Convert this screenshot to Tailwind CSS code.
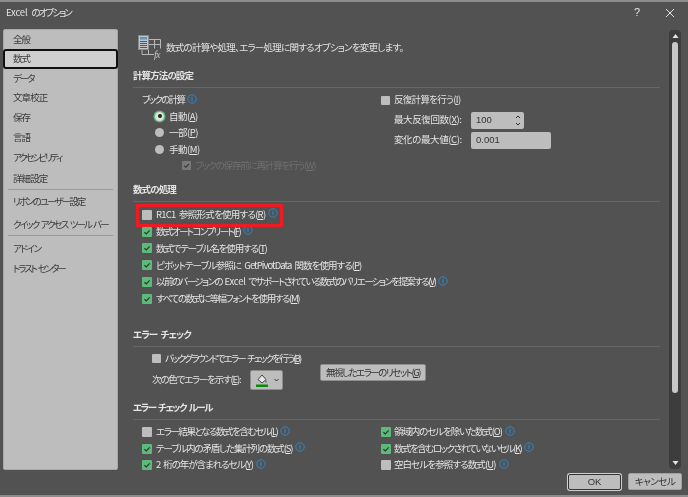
<!DOCTYPE html>
<html lang="ja">
<head>
    <meta charset="UTF-8">
    <title>Excel のオプション</title>
    <script src="https://cdn.jsdelivr.net/npm/@tailwindcss/browser@4"></script>
</head>
<body class="bg-[#525252]">
<svg class="hidden">
    <symbol id="info" viewBox="0 0 10 10"><circle cx="5" cy="5" r="4.2" fill="none" stroke="#2f86c6" stroke-width="1"/><path d="M5 2.700v4.600" stroke="#2f86c6" stroke-width="1.100"/></symbol>
    <symbol id="tick" viewBox="0 0 10 10"><path d="M2.400 5.200l1.900 1.800 3.400-3.600" fill="none" stroke="#333" stroke-width="1.200"/></symbol>
</svg>
<div class="relative w-[688px] h-[497px] overflow-hidden bg-[#525252] border-t-2 border-b-2 border-[#8c8c8c] text-[#e4e4e4] text-[9.500px] leading-none whitespace-nowrap [font-feature-settings:'palt'] [word-spacing:2px] blur-[0.3px] font-['Noto_Sans_CJK_JP','Liberation_Sans',sans-serif]">
    <!-- title bar -->
    <div class="flex items-center h-[27px] pb-[6px] pl-[6px] pr-[13px]">
        <span class="tracking-[-1.900px]"><span class="tracking-[-0.2px]">Excel </span>のオプション</span>
        <span class="ml-auto text-[11px] font-['Liberation_Sans',sans-serif]">?</span>
        <svg class="ml-[25px] w-[10px] h-[10px]" viewBox="0 0 10 10"><path d="M1 1l8 8M9 1l-8 8" stroke="#e4e4e4" stroke-width="1"/></svg>
    </div>

    <div class="flex h-[444px] pl-[3px]">
        <!-- sidebar -->
        <div class="w-[115px] h-[441px] shrink-0 bg-[#bdbdbd] rounded-[2px] border border-[#a8a8a8] text-[#3a3a3a] tracking-[-0.9px]">
            <div class="flex items-center h-[19px] pl-[9px]">全般</div>
            <div class="flex items-center h-[19.700px] pl-[8px] -mx-px bg-[#cfcfcf] border-2 border-[#111] rounded-[3px]">数式</div>
            <div class="flex items-center h-[19.700px] pl-[9px] tracking-[-2px]">データ</div>
            <div class="flex items-center h-[19.700px] pl-[9px]">文章校正</div>
            <div class="flex items-center h-[19.700px] pl-[9px]">保存</div>
            <div class="flex items-center h-[19.700px] pl-[9px]">言語</div>
            <div class="flex items-center h-[19.700px] pl-[9px] tracking-[-2.300px]">アクセシビリティ</div>
            <div class="flex items-center h-[20px] pl-[9px] mt-[2px]">詳細設定</div>
            <div class="h-px mx-[4px] bg-[#9a9a9a]"></div>
            <div class="flex items-center h-[20px] pl-[9px] mt-[2px] tracking-[-1.900px]">リボンのユーザー設定</div>
            <div class="flex items-center h-[20px] pl-[9px] mt-[3px] tracking-[-1.900px]">クイック アクセス ツール バー</div>
            <div class="h-px mx-[4px] bg-[#9a9a9a]"></div>
            <div class="flex items-center h-[20px] pl-[9px] mt-[3px] tracking-[-1.400px]">アドイン</div>
            <div class="flex items-center h-[20px] pl-[9px] tracking-[-2.100px]">トラスト センター</div>
        </div>

        <!-- options -->
        <div class="w-[527px] h-[441px] ml-[15px] shrink-0 overflow-hidden tracking-[-0.9px]">
            <div class="flex items-center h-[37px] pl-[5px]">
                <svg class="w-[24px] h-[25px] shrink-0" viewBox="0 0 24 25" fill="none">
                    <rect x="0.500" y="0.500" width="10" height="14" fill="#c4c4c4" stroke="#8a8a8a"/>
                    <rect x="2" y="2" width="7" height="2.500" fill="#4a9bd8"/>
                    <path d="M2 6.500h7M2 8.500h7M2 10.500h7M2 12.500h7" stroke="#555"/>
                    <path d="M11 4.500h11.500M11 9.500h11.500M16.500 4.500v9M22.500 4.500v9M4 15v4.500h12M10.500 15v4.500" stroke="#b8b8b8"/>
                    <text x="16" y="23" font-size="10" font-style="italic" fill="#c4c4c4" font-family="Liberation Serif, serif">fx</text>
                </svg>
                <span class="ml-[4px] tracking-[-0.75px]">数式の計算や処理、エラー処理に関するオプションを変更します。</span>
            </div>

            <h2 class="flex items-center h-[22px] pb-[1px] border-b border-[#666] font-bold">計算方法の設定</h2>
            <div class="grid grid-cols-[248px_1fr] mt-[4px]">
                <div>
                    <div class="flex items-center h-[16px] pl-[9px] tracking-[-1.700px]">ブックの計算<svg class="ml-[3px] -mt-[3px] w-[10px] h-[10px]"><use href="#info"/></svg></div>
                    <div class="flex items-center h-[16.500px] pl-[22px] tracking-[-0.5px]"><span class="flex items-center justify-center w-[9px] h-[9px] shrink-0 rounded-full bg-[#e0e0e0] ring-[1.500px] ring-[#5cbb7b]"><span class="w-[4px] h-[4px] rounded-full bg-[#222]"></span></span><span class="ml-[5px]">自動(<u>A</u>)</span></div>
                    <div class="flex items-center h-[16.500px] pl-[22px] tracking-[-0.5px]"><span class="w-[9px] h-[9px] shrink-0 rounded-full bg-[#bdbdbd]"></span><span class="ml-[5px]">一部(<u>P</u>)</span></div>
                    <div class="flex items-center h-[16.500px] pl-[22px] tracking-[-0.5px]"><span class="w-[9px] h-[9px] shrink-0 rounded-full bg-[#bdbdbd]"></span><span class="ml-[5px]">手動(<u>M</u>)</span></div>
                    <div class="flex items-center h-[16.500px] pl-[49px] text-[#6f6f6f] tracking-[-1.200px]"><span class="w-[9px] h-[9px] shrink-0 rounded-[1px] bg-[#787878]"><svg class="w-[9px] h-[9px]"><use href="#tick"/></svg></span><span class="ml-[4px]">ブックの保存前に再計算を行う(<u>W</u>)</span></div>
                </div>
                <div>
                    <div class="flex items-center h-[16px] tracking-[-0.7px]"><span class="w-[9px] h-[9px] shrink-0 rounded-[1px] bg-[#bdbdbd]"></span><span class="ml-[4px]">反復計算を行う(<u>I</u>)</span></div>
                    <div class="flex items-center h-[20px] mt-[2px] pl-[13px]">
                        <span class="w-[77px] tracking-[-0.4px]">最大反復回数(<u>X</u>):</span>
                        <span class="flex items-center justify-between w-[53px] h-[17px] pl-[5px] pr-[3px] bg-[#bdbdbd] rounded-[2px] text-[#333] tracking-normal font-['Liberation_Sans',sans-serif]">100<svg class="w-[6px] h-[11px]" viewBox="0 0 6 11" fill="none"><path d="M1 3l2-2 2 2M1 8l2 2 2-2" stroke="#333"/></svg></span>
                    </div>
                    <div class="flex items-center h-[20px] pl-[13px]">
                        <span class="w-[77px] tracking-[-0.4px]">変化の最大値(<u>C</u>):</span>
                        <span class="flex items-center w-[80px] h-[17px] pl-[5px] bg-[#bdbdbd] rounded-[2px] text-[#333] tracking-normal font-['Liberation_Sans',sans-serif]">0.001</span>
                    </div>
                </div>
            </div>

            <h2 class="flex items-center h-[22px] pb-[1px] mt-[6px] border-b border-[#666] font-bold">数式の処理</h2>
            <div class="relative mt-[4.500px]">
                <div class="absolute left-[3px] -top-[3px] w-[147px] h-[23px] border-[3px] border-[#ed1c24]"></div>
                <div class="flex items-center h-[16.800px] pl-[9px]"><span class="w-[10px] h-[10px] shrink-0 rounded-[1px] bg-[#bdbdbd]"></span><span class="ml-[4px] tracking-[-0.75px]">R1C1 参照形式を使用する(<u>R</u>)</span><svg class="ml-[3px] -mt-[3px] w-[10px] h-[10px]"><use href="#info"/></svg></div>
                <div class="flex items-center h-[16.800px] pl-[9px]"><span class="w-[10px] h-[10px] shrink-0 rounded-[1px] bg-[#5cbb7b]"><svg class="w-[10px] h-[10px]"><use href="#tick"/></svg></span><span class="ml-[4px] tracking-[-1.600px]">数式オートコンプリート(<u>F</u>)</span><svg class="ml-[3px] -mt-[3px] w-[10px] h-[10px]"><use href="#info"/></svg></div>
                <div class="flex items-center h-[16.800px] pl-[9px]"><span class="w-[10px] h-[10px] shrink-0 rounded-[1px] bg-[#5cbb7b]"><svg class="w-[10px] h-[10px]"><use href="#tick"/></svg></span><span class="ml-[4px] tracking-[-1.150px]">数式でテーブル名を使用する(<u>T</u>)</span></div>
                <div class="flex items-center h-[16.800px] pl-[9px]"><span class="w-[10px] h-[10px] shrink-0 rounded-[1px] bg-[#5cbb7b]"><svg class="w-[10px] h-[10px]"><use href="#tick"/></svg></span><span class="ml-[4px] tracking-[-0.95px]">ピボットテーブル参照に GetPivotData 関数を使用する(<u>P</u>)</span></div>
                <div class="flex items-center h-[16.800px] pl-[9px]"><span class="w-[10px] h-[10px] shrink-0 rounded-[1px] bg-[#5cbb7b]"><svg class="w-[10px] h-[10px]"><use href="#tick"/></svg></span><span class="ml-[4px] tracking-[-1.600px]">以前のバージョンの <span class="tracking-[-0.2px]">Excel</span> でサポートされている数式のバリエーションを提案する(<u>V</u>)</span><svg class="ml-[3px] -mt-[3px] w-[10px] h-[10px]"><use href="#info"/></svg></div>
                <div class="flex items-center h-[16.800px] pl-[9px]"><span class="w-[10px] h-[10px] shrink-0 rounded-[1px] bg-[#5cbb7b]"><svg class="w-[10px] h-[10px]"><use href="#tick"/></svg></span><span class="ml-[4px] tracking-[-1.400px]">すべての数式に等幅フォントを使用する(<u>M</u>)</span></div>
            </div>

            <h2 class="flex items-center h-[23px] pb-[1px] mt-[16.500px] border-b border-[#666] font-bold">エラー チェック</h2>
            <div class="flex items-start mt-[3.500px]">
                <div class="w-[187px]">
                    <div class="flex items-center h-[17px] pl-[19px]"><span class="w-[9px] h-[9px] shrink-0 rounded-[1px] bg-[#bdbdbd]"></span><span class="ml-[4px] tracking-[-1.800px]">バックグラウンドでエラー チェックを行う(<u>B</u>)</span></div>
                    <div class="flex items-center h-[25px] pl-[19px]">
                        <span class="w-[98px] shrink-0 tracking-[-1.200px]">次の色でエラーを示す(<u>E</u>):</span>
                        <span class="flex items-center justify-center gap-[5px] w-[33px] h-[20px] shrink-0 bg-[#bdbdbd] rounded-[2px] border border-[#8e8e8e]">
                            <svg class="w-[14px] h-[14px]" viewBox="0 0 14 14" fill="none"><path d="M7 2L3 6.500 7 10l4-3.500z" fill="#e8e8e8" stroke="#444"/><path d="M11 7c1 1.200 1 2.500 0 2.500S10 8.200 11 7z" fill="#2f6fb0"/><rect x="1" y="11.500" width="12" height="2.500" fill="#0a8a0a"/></svg>
                            <svg class="w-[5px] h-[4px]" viewBox="0 0 5 4" fill="none"><path d="M.5 1l2 2 2-2" stroke="#333"/></svg>
                        </span>
                    </div>
                </div>
                <button class="flex items-center justify-center w-[106px] h-[17px] mt-[13.500px] shrink-0 bg-[#bdbdbd] rounded-[2px] border border-[#8e8e8e] text-[#333] tracking-[-1.500px]">無視したエラーのリセット(<u>G</u>)</button>
            </div>

            <h2 class="flex items-center h-[22px] pb-[1px] mt-[5.500px] border-b border-[#666] font-bold tracking-[-1.500px]">エラー チェック ルール</h2>
            <div class="grid grid-cols-[248px_1fr] mt-[4px]">
                <div>
                    <div class="flex items-center h-[16.500px] pl-[9px]"><span class="w-[10px] h-[10px] shrink-0 rounded-[1px] bg-[#bdbdbd]"></span><span class="ml-[4px] tracking-[-1.450px]">エラー結果となる数式を含むセル(<u>L</u>)</span><svg class="ml-[3px] -mt-[3px] w-[10px] h-[10px]"><use href="#info"/></svg></div>
                    <div class="flex items-center h-[16.500px] pl-[9px]"><span class="w-[10px] h-[10px] shrink-0 rounded-[1px] bg-[#5cbb7b]"><svg class="w-[10px] h-[10px]"><use href="#tick"/></svg></span><span class="ml-[4px] tracking-[-1.150px]">テーブル内の矛盾した集計列の数式(<u>S</u>)</span><svg class="ml-[3px] -mt-[3px] w-[10px] h-[10px]"><use href="#info"/></svg></div>
                    <div class="flex items-center h-[16.500px] pl-[9px]"><span class="w-[10px] h-[10px] shrink-0 rounded-[1px] bg-[#5cbb7b]"><svg class="w-[10px] h-[10px]"><use href="#tick"/></svg></span><span class="ml-[4px] tracking-[-1.050px]">2 桁の年が含まれるセル(<u>Y</u>)</span><svg class="ml-[3px] -mt-[3px] w-[10px] h-[10px]"><use href="#info"/></svg></div>
                </div>
                <div>
                    <div class="flex items-center h-[16.500px]"><span class="w-[10px] h-[10px] shrink-0 rounded-[1px] bg-[#5cbb7b]"><svg class="w-[10px] h-[10px]"><use href="#tick"/></svg></span><span class="ml-[3px] tracking-[-1.100px]">領域内のセルを除いた数式(<u>O</u>)</span><svg class="ml-[3px] -mt-[3px] w-[10px] h-[10px]"><use href="#info"/></svg></div>
                    <div class="flex items-center h-[16.500px]"><span class="w-[10px] h-[10px] shrink-0 rounded-[1px] bg-[#5cbb7b]"><svg class="w-[10px] h-[10px]"><use href="#tick"/></svg></span><span class="ml-[3px] tracking-[-1.500px]">数式を含むロックされていないセル(<u>K</u>)</span><svg class="ml-[3px] -mt-[3px] w-[10px] h-[10px]"><use href="#info"/></svg></div>
                    <div class="flex items-center h-[16.500px]"><span class="w-[10px] h-[10px] shrink-0 rounded-[1px] bg-[#bdbdbd]"></span><span class="ml-[3px]">空白セルを参照する数式(<u>U</u>)</span><svg class="ml-[3px] -mt-[3px] w-[10px] h-[10px]"><use href="#info"/></svg></div>
                </div>
            </div>
        </div>

        <!-- scrollbar -->
        <div class="flex flex-col items-center w-[12px] h-[439px] ml-[9px] mt-[1px] py-[3px] shrink-0 bg-[#3d3d3d] rounded-[4px]">
            <svg class="w-[7px] h-[6px]" viewBox="0 0 7 6"><path d="M3.500 1L6.500 5H.5z" fill="#e4e4e4"/></svg>
            <div class="w-[6px] h-[351px] mt-[3px] bg-[#c8c8c8] rounded-[3px]"></div>
            <svg class="w-[7px] h-[6px] mt-auto" viewBox="0 0 7 6"><path d="M3.500 5L6.500 1H.5z" fill="#e4e4e4"/></svg>
        </div>
    </div>

    <!-- footer buttons -->
    <div class="flex justify-end gap-[6px] pr-[6px] text-[#333]">
        <button class="w-[55px] h-[18px] bg-[#bdbdbd] rounded-[3px] border-2 border-[#d0d0d0] outline outline-1 outline-[#333] -outline-offset-2 font-['Liberation_Sans',sans-serif]">OK</button>
        <button class="w-[54px] h-[17px] bg-[#bdbdbd] rounded-[2px] border border-[#a0a0a0] tracking-[-0.5px]">キャンセル</button>
    </div>
</div>
</body>
</html>
